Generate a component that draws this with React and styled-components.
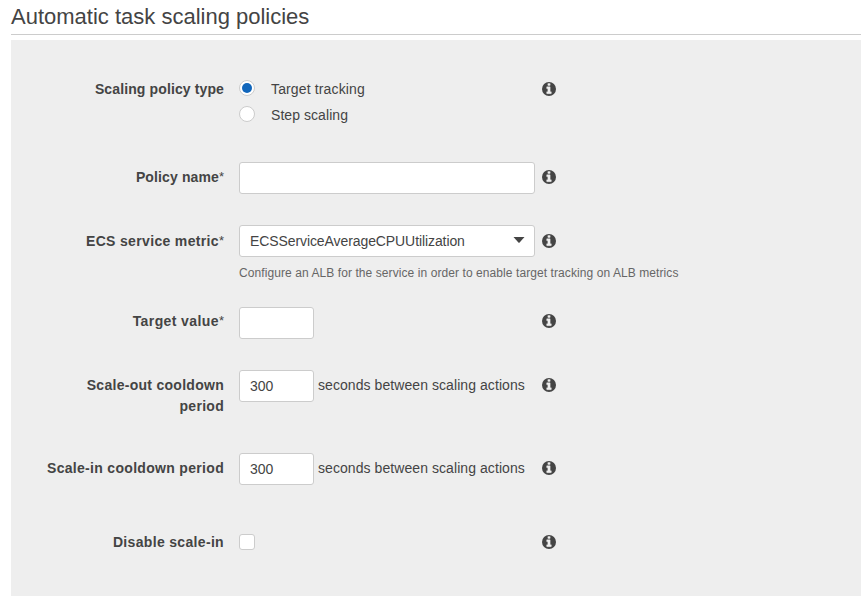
import React from "react";
import styled, { createGlobalStyle } from "styled-components";

const Global = createGlobalStyle`
  * { box-sizing: border-box; }
  body { margin: 0; background: #fff; color: #444; font: 14px/21px "Liberation Sans", Arial, sans-serif; }
`;
const Page = styled.main`
  height: 603px;
  padding: 0 6px 0 11px;
  overflow: hidden;
`;
const Title = styled.h1`
  margin: 0 0 5px;
  height: 35px;
  padding-top: 3px;
  border-bottom: 1px solid #ccc;
  font-size: 22px;
  font-weight: 400;
  line-height: 28px;
`;
const Panel = styled.form`
  height: 556px;
  padding-top: 38px;
  background: #eee;
`;
const Row = styled.div`
  display: grid;
  grid-template-columns: 213px 311px 14px;
  height: ${(p) => p.$h}px;
`;
const Label = styled.div`
  padding-top: ${(p) => p.$top ?? 5}px;
  text-align: right;
  font-weight: 700;
  letter-spacing: ${(p) => p.$track ?? 0.3}px;
`;
const Required = styled.span`
  font-weight: 400;
  font-size: 13px;
  line-height: 1;
  letter-spacing: 0;
  vertical-align: 1px;
`;
const Field = styled.div`
  margin-left: 15px;
  width: 296px;
`;
const InfoCell = styled.div`
  margin-left: 7px;
  padding-top: ${(p) => p.$top ?? 8}px;
  svg { display: block; }
`;
const Line = styled.div`
  display: flex;
  align-items: flex-start;
  gap: 4px;
  white-space: nowrap;
`;
const Suffix = styled.span`
  padding-top: 5px;
  letter-spacing: 0.07px;
`;
const TextInput = styled.input`
  display: block;
  width: ${(p) => p.$w}px;
  height: 32px;
  padding: 0 10px;
  border: 1px solid #ccc;
  border-radius: 3px;
  background: #fff;
  color: #444;
  font: inherit;
  outline: none;
`;
const Select = styled.div`
  display: flex;
  align-items: center;
  justify-content: space-between;
  height: 32px;
  padding: 0 9px 0 10px;
  border: 1px solid #ccc;
  border-radius: 3px;
  background: #fff;
  letter-spacing: -0.09px;
  svg { margin-bottom: 2px; }
`;
const Hint = styled.div`
  margin-top: 7px;
  white-space: nowrap;
  font-size: 12px;
  line-height: 18px;
  letter-spacing: 0.08px;
  color: #666;
`;
const Options = styled.div`
  margin-top: -3px;
`;
const Option = styled.label`
  display: flex;
  align-items: center;
  height: 26px;
  gap: 16px;
`;
const OptionText = styled.span`
  padding-top: 2px;
  letter-spacing: ${(p) => p.$track}px;
`;
const Radio = styled.span`
  display: grid;
  place-items: center;
  width: 16px;
  height: 16px;
  border: 1px solid #ccc;
  border-radius: 50%;
  background: #fff;
  &::after {
    content: "";
    width: 10px;
    height: 10px;
    border-radius: 50%;
    background: ${(p) => (p.$on ? "#1166bb" : "transparent")};
  }
`;
const Checkbox = styled.div`
  width: 16px;
  height: 16px;
  margin-top: 8px;
  border: 1px solid #ccc;
  border-radius: 3px;
  background: #fff;
`;

function Info({ top }) {
  return (
    <InfoCell $top={top}>
      <svg width="14" height="14" viewBox="0 128 1536 1536">
        <circle cx="768" cy="896" r="768" fill="#444" />
        <path
          d="M1024 1376v-160q0-14-9-23t-23-9h-96v-512q0-14-9-23t-23-9h-320q-14 0-23 9t-9 23v160q0 14 9 23t23 9h96v320h-96q-14 0-23 9t-9 23v160q0 14 9 23t23 9h448q14 0 23-9t9-23zM896 480v-160q0-14-9-23t-23-9h-192q-14 0-23 9t-9 23v160q0 14 9 23t23 9h192q14 0 23-9t9-23z"
          fill="#eee"
          stroke="#eee"
          strokeWidth="40"
        />
      </svg>
    </InfoCell>
  );
}

function Cooldown({ label }) {
  return (
    <Line>
      <TextInput $w={75} defaultValue="300" aria-label={label} />
      <Suffix>seconds between scaling actions</Suffix>
    </Line>
  );
}

export default function App() {
  return (
    <>
      <Global />
      <Page>
        <Title>Automatic task scaling policies</Title>
        <Panel>
          <Row $h={84}>
            <Label $top={1} $track={0.12}>Scaling policy type</Label>
            <Field>
              <Options>
                <Option><Radio $on /><OptionText $track={0.14}>Target tracking</OptionText></Option>
                <Option><Radio /><OptionText $track={0.06}>Step scaling</OptionText></Option>
              </Options>
            </Field>
            <Info top={4} />
          </Row>
          <Row $h={63}>
            <Label $track={0.12}>Policy name<Required>*</Required></Label>
            <Field><TextInput $w={296} aria-label="Policy name" /></Field>
            <Info />
          </Row>
          <Row $h={82}>
            <Label $top={6} $track={0.34}>ECS service metric<Required>*</Required></Label>
            <Field>
              <Select>
                ECSServiceAverageCPUUtilization
                <svg width="12" height="6" viewBox="0 0 12 6"><path d="M.5 0h11L6.6 5.5Q6 6 5.4 5.5z" fill="#444" /></svg>
              </Select>
              <Hint>Configure an ALB for the service in order to enable target tracking on ALB metrics</Hint>
            </Field>
            <Info top={9} />
          </Row>
          <Row $h={63}>
            <Label $top={4} $track={0.4}>Target value<Required>*</Required></Label>
            <Field><TextInput $w={75} aria-label="Target value" /></Field>
            <Info top={7} />
          </Row>
          <Row $h={83}>
            <Label $track={0.28}>Scale-out cooldown<br />period</Label>
            <Field><Cooldown label="Scale-out cooldown period" /></Field>
            <Info />
          </Row>
          <Row $h={73}>
            <Label $track={0.31}>Scale-in cooldown period</Label>
            <Field><Cooldown label="Scale-in cooldown period" /></Field>
            <Info />
          </Row>
          <Row $h={40}>
            <Label $top={6} $track={0.33}>Disable scale-in</Label>
            <Field><Checkbox /></Field>
            <Info top={9} />
          </Row>
        </Panel>
      </Page>
    </>
  );
}
